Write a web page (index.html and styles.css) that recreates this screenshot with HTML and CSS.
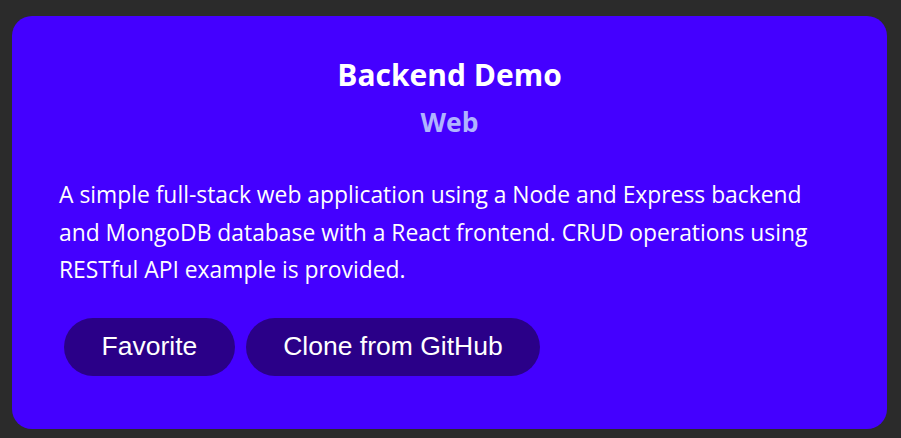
FILE: index.html
```html
<!DOCTYPE html>
<html lang="en">
<head>
<meta charset="utf-8">
<title>Backend Demo</title>
<link rel="stylesheet" href="styles.css">
</head>
<body>
<main class="page">
  <article class="card">
    <h1 class="card-title">Backend Demo</h1>
    <h2 class="card-subtitle">Web</h2>
    <p class="card-desc">A simple full-stack web application using a Node and Express backend and MongoDB database with a React frontend. CRUD operations using RESTful API example is provided.</p>
    <div class="card-actions">
      <button class="btn" type="button">Favorite</button>
      <button class="btn" type="button">Clone from GitHub</button>
    </div>
  </article>
</main>
</body>
</html>
```
FILE: styles.css
```css
html, body {
  margin: 0;
  padding: 0;
  background: #2b2b2b;
}
.page {
  padding: 16px 14px 9px 12px;
}
.card {
  background: #4400ff;
  border-radius: 20px;
  height: 413px;
  box-sizing: border-box;
  padding: 40px 47px 0 47px;
  color: #ffffff;
  font-family: "Open Sans", "Noto Sans", sans-serif;
}
.card-title {
  margin: 0;
  text-align: center;
  font-size: 30px;
  font-weight: 700;
  line-height: 38px;
}
.card-subtitle {
  margin: 11px 0 0;
  text-align: center;
  font-size: 26.5px;
  font-weight: 700;
  line-height: 34px;
  color: #b0b4ff;
}
.card-desc {
  margin: 37px 0 0;
  font-size: 22.85px;
  line-height: 37.5px;
}
.card-actions {
  display: flex;
  gap: 11px;
  margin: 29px 0 0 5px;
}
.btn {
  font-family: "Liberation Sans", Arial, sans-serif;
  font-size: 26.5px;
  color: #ffffff;
  background: #2a0088;
  border: none;
  border-radius: 29px;
  height: 58px;
  padding: 0 37.5px;
}
```
